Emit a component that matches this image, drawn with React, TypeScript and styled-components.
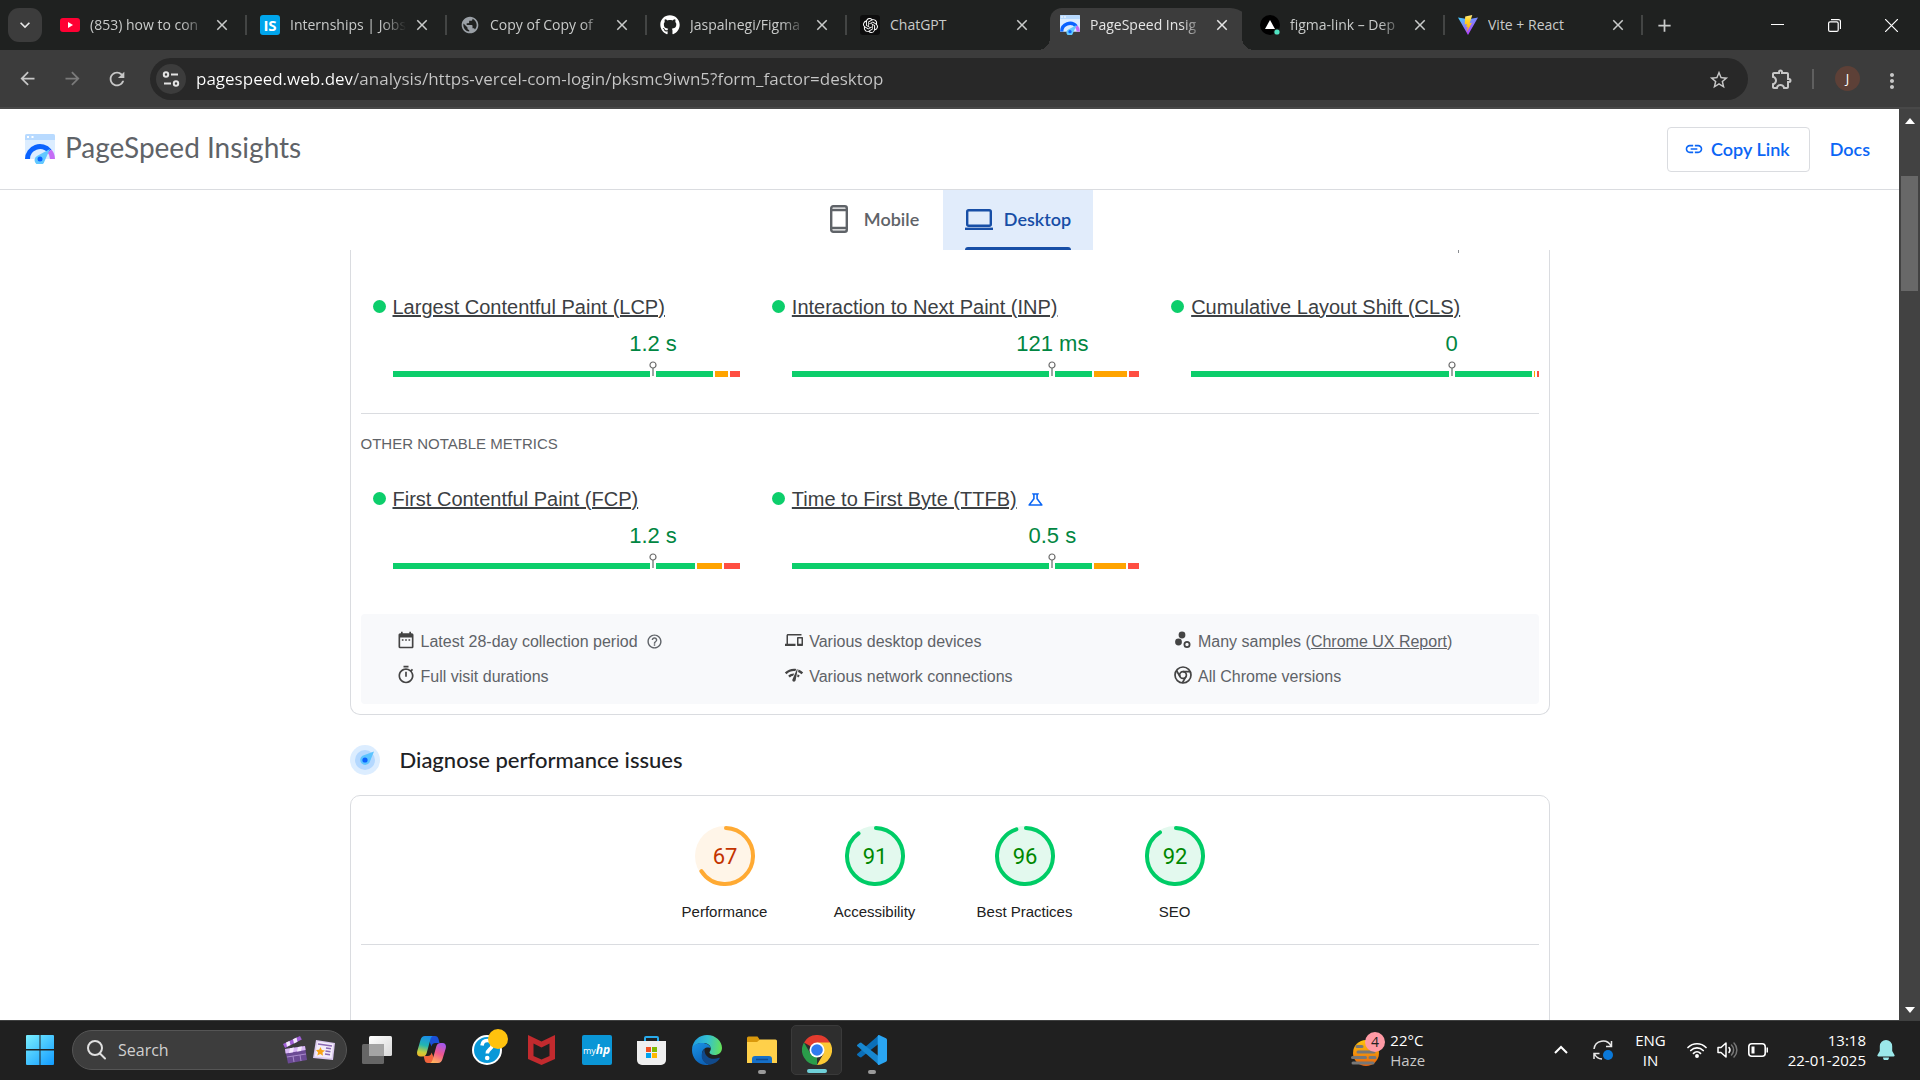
import React from "react";
import styled, { createGlobalStyle, css } from "styled-components";
import {
  MdArrowBack,
  MdArrowForward,
  MdClose,
  MdDateRange,
  MdDevices,
  MdHelpOutline,
  MdKeyboardArrowDown,
  MdLink,
  MdMoreVert,
  MdNetworkCheck,
  MdOutlineExtension,
  MdOutlineScience,
  MdOutlineTimer,
  MdPublic,
  MdRefresh,
  MdStarBorder,
  MdAdd,
} from "react-icons/md";
import { FaGithub } from "react-icons/fa";
import { SiOpenai } from "react-icons/si";

const ui = `"Open Sans", "Noto Sans", sans-serif`;
const brand = `Lato, "Open Sans", sans-serif`;
const body = `"Liberation Sans", Arial, sans-serif`;

const GlobalStyle = createGlobalStyle`
  * { box-sizing: border-box; }
  body { margin: 0; font-family: ${body}; background: #fff; }
  button { font: inherit; color: inherit; background: none; border: 0; padding: 0; margin: 0; cursor: pointer; }
  a { color: inherit; }
  h1, h2, h3, p { margin: 0; font-weight: 400; }
  svg { display: block; flex: none; }
`;

const Shell = styled.div`
  height: 100vh;
  display: flex;
  flex-direction: column;
  overflow: hidden;
`;

/* ---------- browser chrome ---------- */

const TabStrip = styled.div`
  height: 50px;
  flex: none;
  display: flex;
  align-items: center;
  background: #1f2120;
  color: #c9cbca;
  font: 14px/20px ${ui};
  padding-left: 8px;
`;

const TabSearch = styled.button`
  width: 34px;
  height: 34px;
  margin-right: 8px;
  display: grid;
  place-items: center;
  border-radius: 11px;
  background: #3c3c3c;
  color: #e8e8e8;
`;

const TabItem = styled.div<{ $active?: boolean; $compact?: boolean; $divider?: boolean }>`
  position: relative;
  width: ${(p) => (p.$compact ? 198 : 200)}px;
  height: ${(p) => (p.$active ? 42 : 20)}px;
  align-self: ${(p) => (p.$active ? "flex-end" : "center")};
  padding: 0 18px 0 10px;
  display: flex;
  align-items: center;
  gap: 10px;
  ${(p) =>
    p.$divider &&
    css`
      &::after {
        content: "";
        position: absolute;
        right: 3px;
        top: 0;
        width: 2px;
        height: 20px;
        background: #434544;
      }
    `}
  ${(p) =>
    p.$active &&
    css`
      color: #e6e6e6;
      background: linear-gradient(#3c3c3c, #3c3c3c) left / calc(100% - 8px) 100% no-repeat;
      border-radius: 12px 20px 0 0;
      padding-bottom: 8px;
      &::before,
      &::after {
        content: "";
        position: absolute;
        bottom: 0;
        width: 12px;
        height: 12px;
      }
      &::before {
        left: -12px;
        background: radial-gradient(circle at 0 0, transparent 12px, #3c3c3c 12px);
      }
      &::after {
        right: -4px;
        background: radial-gradient(circle at 100% 0, transparent 12px, #3c3c3c 12px);
      }
    `}
`;

const TabTitle = styled.span<{ $fade?: boolean }>`
  flex: 1;
  min-width: 0;
  margin-right: -8px;
  overflow: hidden;
  white-space: nowrap;
  ${(p) => p.$fade && "mask-image: linear-gradient(90deg, #000 76%, transparent 97%);"}
`;

const IconButton = styled.button<{ $size?: number; $muted?: boolean }>`
  width: ${(p) => p.$size ?? 20}px;
  height: ${(p) => p.$size ?? 20}px;
  flex: none;
  display: grid;
  place-items: center;
  opacity: ${(p) => (p.$muted ? 0.45 : 1)};
`;

const WindowControls = styled.div`
  margin-left: auto;
  display: flex;
  color: #fff;
  button {
    width: 57px;
    height: 50px;
  }
`;

const Toolbar = styled.div`
  height: 59px;
  flex: none;
  display: flex;
  align-items: center;
  background: #3c3c3c;
  border-bottom: 2px solid #484848;
  color: #c7c7c7;
  padding: 0 20px 0 12px;
`;

const NavButtons = styled.div`
  display: flex;
  gap: 15px;
  margin-right: 18px;
`;

const Omnibox = styled.label`
  flex: 1;
  height: 42px;
  display: flex;
  align-items: center;
  gap: 10px;
  padding: 0 20px 0 6px;
  border-radius: 21px;
  background: #282828;
`;

const SiteInfo = styled.span`
  width: 30px;
  height: 30px;
  display: grid;
  place-items: center;
  border-radius: 50%;
  background: #3c3c3c;
  color: #e3e3e3;
`;

const UrlInput = styled.input`
  flex: 1;
  min-width: 0;
  height: 28px;
  padding: 0;
  border: 0;
  outline: 0;
  font: 17px/28px ${ui};
  color: #c7c7c7;
  background: linear-gradient(90deg, #fff 156px, #c7c7c7 156px);
  background-clip: text;
  -webkit-text-fill-color: transparent;
`;

const ToolbarEnd = styled.div`
  display: flex;
  align-items: center;
  margin-left: 22px;
`;

const Separator = styled.span`
  width: 2px;
  height: 20px;
  margin: 0 21px 0 18px;
  background: #5f5f5f;
`;

const Avatar = styled.button`
  width: 25px;
  height: 25px;
  margin-right: 20px;
  border-radius: 50%;
  background: #5d4037;
  color: #fff;
  font: 13px/25px ${ui};
`;

/* ---------- page ---------- */

const Viewport = styled.div`
  flex: 1;
  min-height: 0;
  display: flex;
`;

const Page = styled.div`
  flex: 1;
  min-width: 0;
  display: flex;
  flex-direction: column;
  background: #fff;
`;

const Scrollbar = styled.div`
  width: 21px;
  display: flex;
  flex-direction: column;
  align-items: center;
  justify-content: space-between;
  padding: 9px 0 7px;
  background: #424242;
  color: #fff;
`;

const Track = styled.div`
  flex: 1;
  padding-top: 52px;
`;

const Thumb = styled.div`
  width: 17px;
  height: 115px;
  background: #686868;
`;

const Header = styled.header`
  height: 81px;
  flex: none;
  display: flex;
  align-items: center;
  padding: 0 29px 0 25px;
  border-bottom: 1px solid #dadce0;
`;

const Brand = styled.h1`
  display: flex;
  align-items: center;
  gap: 10px;
  margin-right: auto;
  font: 28px/32px ${brand};
  color: #5f6368;
`;

const BrandName = styled.span`
  padding-bottom: 4px;
`;

const CopyButton = styled.button`
  height: 45px;
  display: flex;
  align-items: center;
  gap: 7px;
  padding: 0 19px 0 16px;
  margin-right: 20px;
  border: 1px solid #dadce0;
  border-radius: 4px;
  font: 600 18px/24px ${brand};
  color: #0b66f5;
`;

const DocsLink = styled.a`
  font: 600 18px/24px ${brand};
  color: #0b66f5;
  text-decoration: none;
`;

const DeviceTabs = styled.div`
  height: 60px;
  flex: none;
  display: flex;
  justify-content: center;
`;

const DeviceTab = styled.button<{ $active?: boolean }>`
  display: flex;
  align-items: center;
  gap: ${(p) => (p.$active ? 11 : 16)}px;
  width: ${(p) => (p.$active ? 150 : 137)}px;
  padding-bottom: 2px;
  justify-content: center;
  position: relative;
  font: 600 18px/24px ${brand};
  color: ${(p) => (p.$active ? "#174ea6" : "#5f6368")};
  background: ${(p) => (p.$active ? "#e1ecfb" : "transparent")};
  ${(p) =>
    p.$active &&
    css`
      &::after {
        content: "";
        position: absolute;
        left: 22px;
        right: 22px;
        bottom: 0;
        height: 3px;
        border-radius: 3px 3px 0 0;
        background: #174ea6;
      }
    `}
`;

const Scroller = styled.main`
  flex: 1;
  min-height: 0;
  overflow: hidden;
`;

const Column = styled.div`
  width: 100%;
  max-width: 1200px;
  margin: 0 auto;
`;

const Card = styled.section<{ $cut?: boolean }>`
  border: 1px solid #dadce0;
  border-radius: ${(p) => (p.$cut ? "0 0 10px 10px" : "10px")};
  border-top-width: ${(p) => (p.$cut ? 0 : 1)}px;
  padding: ${(p) => (p.$cut ? "0 10px 10px" : "0 10px 120px")};
`;

const CutStem = styled.div`
  width: 1px;
  height: 3px;
  margin-left: auto;
  margin-right: 80px;
  background: #8a8d91;
`;

const MetricGrid = styled.div`
  display: grid;
  grid-template-columns: repeat(3, 1fr);
  column-gap: 32px;
  padding-left: 12px;
`;

const Metric = styled.article`
  display: grid;
  grid-template-columns: 13px 1fr;
  column-gap: 7px;
  align-items: center;
`;

const Dot = styled.span`
  width: 13px;
  height: 13px;
  margin-bottom: 2px;
  border-radius: 50%;
  background: #0cce6b;
`;

const MetricTitle = styled.h3`
  display: flex;
  align-items: center;
  gap: 9px;
  font: 20px/26px ${body};
  color: #3c4043;
  white-space: nowrap;
  svg {
    color: #0b66f5;
  }
`;

const MetricValue = styled.p`
  grid-column: 2;
  width: 50%;
  margin: 12px 0 15px auto;
  text-align: center;
  font: 22px/24px ${body};
  color: #018642;
`;

const Bar = styled.div`
  grid-column: 2;
  position: relative;
  display: flex;
  gap: 2px;
  height: 6px;
`;

const Segment = styled.span<{ $share: number; $tone: string }>`
  flex: ${(p) => p.$share} 1 0;
  background: ${(p) => p.$tone};
`;

const Marker = styled.svg`
  position: absolute;
  left: 75%;
  bottom: 0;
  margin-left: -4px;
`;

const Divider = styled.hr`
  border: 0;
  border-top: 1px solid #dadce0;
  margin: 0;
`;

const SectionLabel = styled.h2`
  font: 15px/20px ${body};
  color: #5f6368;
`;

const Block = styled.div<{ $top: number; $bottom: number }>`
  padding: ${(p) => p.$top}px 0 ${(p) => p.$bottom}px;
`;

const MetaGrid = styled.ul`
  list-style: none;
  margin: 0;
  padding: 10px 0;
  display: grid;
  grid-template-columns: repeat(3, 33%);
  grid-auto-rows: 35px;
  border-radius: 4px;
  background: #f8f9fb;
`;

const MetaItem = styled.li`
  display: flex;
  align-items: center;
  gap: 6px;
  padding-left: 36px;
  font: 16px/20px ${body};
  color: #5f6368;
  white-space: nowrap;
`;

const MetaIcon = styled.span`
  width: 18px;
  display: flex;
  justify-content: center;
  padding-bottom: 4px;
  color: #444;
`;

const MetaText = styled.span`
  margin-right: 2px;
`;

const SectionTitle = styled.h2`
  display: flex;
  align-items: center;
  gap: 20px;
  padding: 30px 0 20px;
  font: 500 22px/30px ${brand};
  color: #202124;
`;

const Gauges = styled.div`
  display: flex;
  justify-content: center;
  padding: 30px 0 22px;
`;

const GaugeLink = styled.a`
  width: 150px;
  display: flex;
  flex-direction: column;
  align-items: center;
  gap: 16px;
  font: 15px/20px ${body};
  color: #212121;
  text-decoration: none;
`;

/* ---------- taskbar ---------- */

const Taskbar = styled.footer`
  height: 60px;
  flex: none;
  display: flex;
  align-items: center;
  border-top: 1px solid #3f4040;
  background: #202020;
  color: #fff;
  font: 15px/20px ${ui};
  padding: 0 25px 2px 12px;
`;

const TaskSlot = styled.button<{ $open?: "idle" | "focus" }>`
  position: relative;
  width: 55px;
  height: 50px;
  display: grid;
  place-items: center;
  ${(p) =>
    p.$open === "focus" &&
    css`
      width: 51px;
      margin: 0 2px;
      border: 1px solid #3a3a3a;
      border-radius: 5px;
      background: #2e2e2e;
    `}
  ${(p) =>
    p.$open &&
    css`
      &::after {
        content: "";
        position: absolute;
        bottom: 1px;
        left: 50%;
        width: ${p.$open === "focus" ? 20 : 8}px;
        margin-left: ${p.$open === "focus" ? -10 : -4}px;
        height: 4px;
        border-radius: 2px;
        background: ${p.$open === "focus" ? "#6fd0d8" : "#9a9a9a"};
      }
    `}
`;

const SearchBox = styled.label`
  width: 275px;
  height: 40px;
  margin: 0 2px 0 5px;
  padding: 0 10px 0 14px;
  display: flex;
  align-items: center;
  gap: 12px;
  border: 1px solid #555;
  border-radius: 20px;
  background: #3d3d3d;
`;

const SearchInput = styled.input`
  flex: 1;
  min-width: 0;
  border: 0;
  outline: 0;
  padding: 0;
  background: none;
  font: 16px/24px ${ui};
  color: #d0d0d0;
  &::placeholder {
    color: #d0d0d0;
    opacity: 1;
  }
`;

const SearchArt = styled.span`
  display: flex;
  align-items: center;
  gap: 5px;
`;

const Tray = styled.div`
  margin-left: auto;
  display: flex;
  align-items: center;
`;

const Weather = styled.button`
  display: flex;
  align-items: center;
  gap: 5px;
  margin-right: 126px;
  text-align: left;
`;

const Stack = styled.span<{ $align?: string }>`
  display: flex;
  flex-direction: column;
  text-align: ${(p) => p.$align ?? "left"};
  line-height: 20px;
`;

const Dim = styled.span`
  color: #c8c8c8;
`;

const TrayGroup = styled.span<{ $left: number; $gap?: number }>`
  display: flex;
  align-items: center;
  gap: ${(p) => p.$gap ?? 0}px;
  margin-left: ${(p) => p.$left}px;
`;

/* ---------- drawings ---------- */

const PsiLogo = ({ size, id }: { size: number; id: string }) => (
  <svg width={size} height={size} viewBox="0 0 30 30" aria-hidden="true">
    <defs>
      <clipPath id={id}>
        <path d="M0 0h30v25H0z" />
      </clipPath>
    </defs>
    <path d="M2 0h26a2 2 0 0 1 2 2v23H0V2a2 2 0 0 1 2-2z" fill="#dcedff" />
    <path d="M2 0h26a2 2 0 0 1 2 2v4H0V2a2 2 0 0 1 2-2z" fill="#b8daff" />
    <path d="M2 2h2v2H2zM6.500 2h2v2h-2z" fill="#fff" />
    <g clipPath={`url(#${id})`} fill="none" strokeWidth="5">
      <path d="M2.500 25a12.500 12.500 0 0 1 22-8" stroke="#0a63ff" />
      <path d="M24.500 17a12.500 12.500 0 0 1 3 8" stroke="#c56cf5" />
    </g>
    <path d="M25 15 19.400 27.500a5 5 0 1 1-7-5.800z" fill="#62c8ff" />
    <circle cx="15" cy="25" r="2.500" fill="#0a63ff" />
  </svg>
);

const YouTube = () => (
  <svg width="20" height="20" viewBox="0 0 20 20">
    <rect y="3" width="20" height="14" rx="3" fill="#ff0033" />
    <path d="M8 7v6l5-3z" fill="#fff" />
  </svg>
);

const LetterMark = styled.span`
  width: 20px;
  height: 20px;
  flex: none;
  border-radius: 3px;
  background: #00a5ec;
  color: #fff;
  font: 700 15px/20px ${ui};
  text-align: center;
`;

const VercelMark = () => (
  <svg width="20" height="20" viewBox="0 0 20 20">
    <circle cx="10" cy="10" r="10" fill="#000" />
    <path d="M10 5l5 9H5z" fill="#fff" />
    <circle cx="17" cy="17" r="3.500" fill="#1f2120" />
    <circle cx="17" cy="17" r="2.600" fill="#50e3c2" />
  </svg>
);

const ViteMark = () => (
  <svg width="20" height="20" viewBox="0 0 20 20">
    <defs>
      <linearGradient id="viteBody" x1="0" y1="0" x2=".6" y2="1">
        <stop stopColor="#41d1ff" />
        <stop offset="1" stopColor="#bd34fe" />
      </linearGradient>
      <linearGradient id="viteBolt" x1="0" y1="0" x2="0" y2="1">
        <stop stopColor="#ffea83" />
        <stop offset=".3" stopColor="#ffd62b" />
        <stop offset="1" stopColor="#ffa800" />
      </linearGradient>
    </defs>
    <path d="M0 2.500 10 20 20 2.500 10.500 4.200z" fill="url(#viteBody)" />
    <path d="M14.300 0 7.200 1.400 6.700 9.500l2.200-.5-.7 3.200 1.600-.4-1.100 5.200 5.200-9.200-2.300.4z" fill="url(#viteBolt)" />
  </svg>
);

const ChatMark = styled.span`
  width: 20px;
  height: 20px;
  flex: none;
  display: grid;
  place-items: center;
  border-radius: 3px;
  background: #0d0d0d;
  color: #fff;
`;

const TuneIcon = () => (
  <svg width="18" height="18" viewBox="0 0 18 18" fill="none" stroke="currentColor" strokeWidth="2">
    <circle cx="4" cy="4.500" r="2.200" />
    <path d="M9 4.500h7M2 13.500h7" />
    <circle cx="14" cy="13.500" r="2.200" />
  </svg>
);

const PhoneIcon = () => (
  <svg width="18" height="28" viewBox="0 0 18 28">
    <rect x="1.200" y="1.200" width="15.600" height="25.600" rx="2" fill="none" stroke="currentColor" strokeWidth="2.400" />
    <path d="M2 5h14M2 23h14" stroke="currentColor" strokeWidth="2.400" />
  </svg>
);

const LaptopIcon = () => (
  <svg width="28" height="21" viewBox="0 0 28 21" fill="none" stroke="currentColor" strokeWidth="2.400">
    <rect x="2.200" y="1.200" width="23.600" height="15.600" rx="1.500" />
    <path d="M0 19.800h28" />
  </svg>
);

const SamplesIcon = () => (
  <svg width="18" height="18" viewBox="0 0 18 18" fill="currentColor">
    <circle cx="8" cy="4" r="3.400" />
    <circle cx="4.500" cy="11" r="3.400" />
    <circle cx="13" cy="13.500" r="2.600" fill="none" stroke="currentColor" strokeWidth="1.800" />
  </svg>
);

const ChromeLine = () => (
  <svg width="18" height="18" viewBox="0 0 18 18" fill="none" stroke="currentColor" strokeWidth="1.700">
    <circle cx="9" cy="9" r="8" />
    <circle cx="9" cy="9" r="3.400" />
    <path d="M9 5.600h7.200M6.100 10.700 2.500 4.500M11.900 10.700 8.300 17" />
  </svg>
);

const CompassIcon = () => (
  <svg width="30" height="30" viewBox="0 0 30 30">
    <circle cx="15" cy="15" r="15" fill="#dcedff" />
    <circle cx="15" cy="15" r="10" fill="#b4d8ff" />
    <path d="M24 6.500 19.500 17.500A5 5 0 1 1 12.500 10.700z" fill="#5cc4ff" />
    <circle cx="15" cy="15" r="2.600" fill="#0a63ff" />
  </svg>
);

const StartLogo = () => (
  <svg width="28" height="30" viewBox="0 0 28 30">
    <defs>
      <linearGradient id="start" gradientUnits="userSpaceOnUse" x1="0" y1="0" x2="28" y2="30">
        <stop stopColor="#7aefff" />
        <stop offset="1" stopColor="#119bff" />
      </linearGradient>
    </defs>
    <path d="M1 0h12.500v14H0V1a1 1 0 0 1 1-1zM14.500 0H27a1 1 0 0 1 1 1v13H14.500zM0 15.500h13.500V30H1a1 1 0 0 1-1-1zM14.500 15.500H28V29a1 1 0 0 1-1 1H14.500z" fill="url(#start)" />
  </svg>
);

const Lens = () => (
  <svg width="19" height="20" viewBox="0 0 19 20" fill="none" stroke="#e0e0e0" strokeWidth="2">
    <circle cx="8" cy="8" r="7" />
    <path d="m13 13.500 5 5" strokeLinecap="round" />
  </svg>
);

const Clapper = () => (
  <svg width="26" height="28" viewBox="0 0 26 28">
    <path d="m3 13 20-3 2 14-19 3.500z" fill="#6b4a94" />
    <path d="m3 13 20-3 .6 4-20 3.400z" fill="#d9b8f5" />
    <path d="M1 8 18 0l1.800 3.600L3 12z" fill="#a05fd6" />
    <path d="m4 6.600 3.500-1.700 1 4.200L5 10.800zM11 3.300l3.500-1.700 1 4.100-3.500 1.700zM8 12.200l4-.6-1 4.600-4 .7zM16 11l4-.6-1 4.500-4 .6z" fill="#f4e8fd" />
    <path d="m5 21 19-3M11 20l1 6M18 19l1 6" stroke="#a98acb" strokeWidth="1" />
  </svg>
);

const NewsArt = () => (
  <svg width="23" height="22" viewBox="0 0 23 22">
    <path d="m3 1 19 3-2 17L0 19z" fill="#dccbf0" />
    <path d="m4.500 2.500 15.800 2.500-1.700 14L1.800 17.500z" fill="#f3ecfa" />
    <path d="m5 5 14 2M13 9l5 .7M12.500 12l5 .7M12 15l5 .7" stroke="#8a68b3" strokeWidth="1.500" />
    <path d="m7.500 8 1.300 2.900 3.200.5-2.500 2.100.5 3.300-2.800-1.700-2.900 1.400.8-3.100L3 11l3.200-.2z" fill="#f7a418" />
  </svg>
);

const TaskView = () => (
  <svg width="30" height="30" viewBox="0 0 30 30">
    <defs>
      <linearGradient id="viewFront" x1="0" y1="0" x2="1" y2="1">
        <stop stopColor="#fff" />
        <stop offset="1" stopColor="#d8d8d8" />
      </linearGradient>
    </defs>
    <rect y="9" width="22" height="20" rx="1.500" fill="#666" />
    <rect x="7" y="1" width="23" height="20" rx="1.500" fill="url(#viewFront)" />
    <path d="M7 9h15v12H7z" fill="#a4a4a4" />
  </svg>
);

const Copilot = () => (
  <svg width="29" height="27" viewBox="0 0 29 27">
    <defs>
      <linearGradient id="copLeft" x1=".5" y1="0" x2=".3" y2="1">
        <stop stopColor="#1a8ee8" />
        <stop offset=".45" stopColor="#23b6b0" />
        <stop offset=".8" stopColor="#c9cf3a" />
        <stop offset="1" stopColor="#f0b52b" />
      </linearGradient>
      <linearGradient id="copRight" x1=".7" y1="0" x2=".3" y2="1">
        <stop stopColor="#a457ee" />
        <stop offset=".5" stopColor="#f0588c" />
        <stop offset="1" stopColor="#ffb45c" />
      </linearGradient>
    </defs>
    <path d="M10 0h8c2 0 3 1 3.500 3l1 4h-4c-2.500 0-3.500 1.500-4 3.500z" fill="#1a50d8" />
    <path d="M19 27h-8c-2 0-3-1-3.400-3l-1-4h4c2.500 0 3.500-1.500 4-3.500z" fill="#f0643c" />
    <path d="M8 0h8.500c-2 0-2.700 2-3.300 4l-3.500 13c-.7 2.400-2 3.500-4.500 3.500H3.500C.5 20.500-.5 18 .3 15L3.500 4C4.300 1.500 5.600 0 8 0z" fill="url(#copLeft)" />
    <path d="M21 27h-8.500c2 0 2.700-2 3.300-4l3.500-12.500c.7-2.400 2-3.500 4.500-3.500h1.700c3 0 4 2.500 3.200 5.500L25.500 23c-.8 2.500-2.100 4-4.500 4z" fill="url(#copRight)" />
  </svg>
);

const HelpBadge = () => (
  <svg width="32" height="32" viewBox="0 6 32 32" overflow="visible">
    <circle cx="16" cy="22" r="14" fill="#0898d8" stroke="#fff" strokeWidth="2" />
    <path d="M11 17.500c.3-3.400 2.600-5 5.300-5 3 0 5 1.800 5 4.400 0 4.300-5 4.300-5 8.600" fill="none" stroke="#fff" strokeWidth="3.600" />
    <circle cx="16.200" cy="30" r="2.300" fill="#fff" />
    <circle cx="27" cy="11" r="10" fill="#ffc20e" />
  </svg>
);

const Shield = () => (
  <svg width="27" height="30" viewBox="0 0 27 30">
    <path d="m0 0 13.500 6.500L27 0v24l-13.500 6L0 24z" fill="#c22a2e" />
    <path d="m5.500 8.500 8 4 8-4V21l-8 3.600-8-3.600z" fill="#202020" />
  </svg>
);

const HpTile = styled.span`
  width: 30px;
  height: 30px;
  border-radius: 2px;
  background: #0a96d6;
  color: #fff;
  font: 9px/30px ${ui};
  text-align: center;
  white-space: nowrap;
  i {
    font-size: 12px;
    font-weight: 700;
  }
`;

const StoreBag = () => (
  <svg width="29" height="30" viewBox="0 0 29 30">
    <path d="M8 7V3a1 1 0 0 1 1-1h11a1 1 0 0 1 1 1v4" fill="none" stroke="#28aaeb" strokeWidth="2" />
    <path d="M0 6h29v19a5 5 0 0 1-5 5H5a5 5 0 0 1-5-5z" fill="#efefef" />
    <path d="M9 12h5v5H9z" fill="#f25022" />
    <path d="M15 12h5v5h-5z" fill="#7fba00" />
    <path d="M9 18h5v5H9z" fill="#00a4ef" />
    <path d="M15 18h5v5h-5z" fill="#ffb900" />
  </svg>
);

const Edge = () => (
  <svg width="30" height="30" viewBox="0 0 30 30">
    <defs>
      <linearGradient id="edgeTop" x1="0" y1=".5" x2="1" y2=".6">
        <stop stopColor="#1f9de0" />
        <stop offset=".5" stopColor="#35c1d0" />
        <stop offset="1" stopColor="#66e356" />
      </linearGradient>
      <linearGradient id="edgeLow" x1="0" y1="0" x2=".5" y2="1">
        <stop stopColor="#1a94e6" />
        <stop offset="1" stopColor="#0c62b8" />
      </linearGradient>
    </defs>
    <path d="M0 14C1 5 7.500 0 15 0c9 0 15 6.500 15 13 0 4.500-3.500 7-7.500 7-3.500 0-5-1.400-5-2.400 0-1.200 1.300-1.600 1.300-4.100C18.800 10 15 8 11 8 6 8 2 10 0 14z" fill="url(#edgeTop)" />
    <path d="M0 15C0 10 5 8 10 8c5 0 8.500 2.500 8.800 5.500C17 11.500 10.500 12 10 18.500 9.500 25 14 29 18 29.600 8 32 0 24.500 0 15z" fill="url(#edgeLow)" />
    <path d="M12.500 14C8 18 8.500 28 18 29.700c4.500-.7 7.700-3.200 9.700-6.200.4-.7-.2-1-.8-.7-6.900 3-14.900-.4-14.400-8.800z" fill="#114a8b" />
  </svg>
);

const Folder = () => (
  <svg width="30" height="28" viewBox="0 0 30 28">
    <path d="M0 2a1.500 1.500 0 0 1 1.500-1.500h9L13 4v6H0z" fill="#d9980c" />
    <path d="M0 6h10l3-2.500h15.500A1.500 1.500 0 0 1 30 5v22H0z" fill="#ffd04a" />
    <path d="M5 27v-4a3 3 0 0 1 3-3h14a3 3 0 0 1 3 3v4z" fill="#1670c8" />
    <path d="M9 23.500h12" stroke="#0c4a92" strokeWidth="1.500" />
  </svg>
);

const Chrome = () => (
  <svg width="30" height="30" viewBox="0 0 30 30">
    <path d="M15 15 2 7.500a15 15 0 0 1 26 0z" fill="#e33b2e" />
    <path d="M2 7.500 8.500 18.700 15 22.500V30A15 15 0 0 1 2 7.500z" fill="#2a9d4a" />
    <path d="M15 7.500h13A15 15 0 0 1 15 30l6.500-11.300z" fill="#fcc934" />
    <circle cx="15" cy="15" r="7.500" fill="#fff" />
    <circle cx="15" cy="15" r="5.800" fill="#2f7bf0" />
  </svg>
);

const Code = () => (
  <svg width="30" height="30" viewBox="0 0 30 30">
    <path d="M22 0v8.500L4 22.500 2.500 22 .4 20.200a1 1 0 0 1 0-1.500z" fill="#0b6fb8" />
    <path d="M22 30v-8.500L4 7.500 2.500 8 .4 9.800a1 1 0 0 0 0 1.500z" fill="#1787d0" />
    <path d="M22 0l7 3.200a2 2 0 0 1 1 1.700v20.200a2 2 0 0 1-1 1.700L22 30c-.7 0-1.300-.6-1.300-1.300V1.300C20.700.6 21.300 0 22 0z" fill="#2aa5f2" />
  </svg>
);

const Haze = () => (
  <svg width="34" height="36" viewBox="0 0 34 36">
    <defs>
      <linearGradient id="sun" x1="0" y1="0" x2="0" y2="1">
        <stop stopColor="#ffc40c" />
        <stop offset="1" stopColor="#e8600c" />
      </linearGradient>
    </defs>
    <circle cx="15" cy="21" r="13" fill="url(#sun)" />
    <path d="M6 14.500h5M7 20h16M1.500 25.500h13M19 25.500h5M2 31h20" stroke="#777" strokeWidth="3" strokeLinecap="round" />
    <circle cx="24" cy="10" r="10" fill="#ff9aa5" />
    <text x="24" y="15" textAnchor="middle" fontSize="14" fill="#222" fontFamily="Open Sans, sans-serif">4</text>
  </svg>
);

const Sync = () => (
  <svg width="22" height="22" viewBox="0 0 22 22" fill="none" stroke="#e8e8e8" strokeWidth="1.500">
    <path d="M2 10a9 9 0 0 1 17-3M19.500 2v5.500H14M10 20a9 9 0 0 1-7.500-5M2 20v-5.500h5.500" />
    <circle cx="16" cy="16" r="5" fill="#0a78d8" stroke="none" />
  </svg>
);

const Wifi = () => (
  <svg width="20" height="16" viewBox="0 0 20 16" fill="none" stroke="#fff" strokeWidth="1.700" strokeLinecap="round">
    <path d="M1 5.500a12.700 12.700 0 0 1 18 0M3.800 8.500a8.800 8.800 0 0 1 12.400 0M6.500 11.300a5 5 0 0 1 7 0" />
    <circle cx="10" cy="14" r="1.100" fill="#fff" />
  </svg>
);

const Volume = () => (
  <svg width="21" height="18" viewBox="0 0 21 18" fill="none" stroke="#fff" strokeWidth="1.500" strokeLinecap="round" strokeLinejoin="round">
    <path d="M1 6.500v5h3l5 4.500V2L4 6.500zM12 6.500a4 4 0 0 1 0 5" />
    <path d="M14.500 4a7 7 0 0 1 0 10M17 2a10 10 0 0 1 0 14" stroke="#777" />
  </svg>
);

const Battery = () => (
  <svg width="21" height="14" viewBox="0 0 21 14">
    <rect x=".8" y=".8" width="16.400" height="12.400" rx="3" fill="none" stroke="#fff" strokeWidth="1.600" />
    <path d="M3.500 3.500h3v7h-3zM18.500 4.500h1.500v5h-1.500z" fill="#fff" />
  </svg>
);

const Bell = () => (
  <svg width="18" height="20" viewBox="0 0 18 20" fill="#9be8ea">
    <path d="M9 0a6.200 6.200 0 0 1 6.200 6.200V11l2.300 4a1 1 0 0 1-.9 1.500H1.400A1 1 0 0 1 .5 15l2.300-4V6.200A6.200 6.200 0 0 1 9 0zM6 17.500h6a3 3 0 0 1-6 0z" />
  </svg>
);

/* ---------- composed parts ---------- */

type TabData = { icon: React.ReactNode; title: string; fade?: boolean; active?: boolean; compact?: boolean; divider?: boolean };

const tabs: TabData[] = [
  { icon: <YouTube />, title: "(853) how to con", fade: true, divider: true },
  { icon: <LetterMark>IS</LetterMark>, title: "Internships | Jobs", fade: true, divider: true },
  { icon: <MdPublic size={20} color="#9aa0a6" />, title: "Copy of Copy of", fade: true, divider: true },
  { icon: <FaGithub size={20} color="#fff" />, title: "Jaspalnegi/Figma", fade: true, divider: true },
  { icon: <ChatMark><SiOpenai size={15} /></ChatMark>, title: "ChatGPT" },
  { icon: <PsiLogo size={20} id="tabArc" />, title: "PageSpeed Insig", fade: true, active: true },
  { icon: <VercelMark />, title: "figma-link – Dep", fade: true, compact: true, divider: true },
  { icon: <ViteMark />, title: "Vite + React", compact: true, divider: true },
];

const GREEN = "#0cce6b";
const ORANGE = "#ffa400";
const RED = "#ff4e42";

type MetricData = { name: string; value: string; shares: [number, number, number]; experimental?: boolean };

const coreMetrics: MetricData[] = [
  { name: "Largest Contentful Paint (LCP)", value: "1.2 s", shares: [320, 13, 10] },
  { name: "Interaction to Next Paint (INP)", value: "121 ms", shares: [300, 33, 10] },
  { name: "Cumulative Layout Shift (CLS)", value: "0", shares: [340, 1, 2] },
];

const otherMetrics: MetricData[] = [
  { name: "First Contentful Paint (FCP)", value: "1.2 s", shares: [302, 25, 16] },
  { name: "Time to First Byte (TTFB)", value: "0.5 s", shares: [300, 32, 11], experimental: true },
];

const MetricView = ({ m }: { m: MetricData }) => (
  <Metric>
    <Dot />
    <MetricTitle>
      <a href="#metric">{m.name}</a>
      {m.experimental && <MdOutlineScience size={19} />}
    </MetricTitle>
    <MetricValue>{m.value}</MetricValue>
    <Bar>
      <Segment $share={m.shares[0]} $tone={GREEN} />
      <Segment $share={m.shares[1]} $tone={ORANGE} />
      <Segment $share={m.shares[2]} $tone={RED} />
      <Marker width="8" height="16" viewBox="0 0 8 16">
        <path d="M1 10h6v6H1z" fill="#fff" />
        <path d="M4 7v8" stroke="#7d8a84" strokeWidth="1.500" />
        <circle cx="4" cy="4" r="3" fill="#fff" stroke="#6b6b6b" strokeWidth="1.200" />
      </Marker>
    </Bar>
  </Metric>
);

const gauges = [
  { label: "Performance", score: 67, ring: "#fa3", text: "#c33300", fill: "#fff5e8" },
  { label: "Accessibility", score: 91, ring: "#0c6", text: "#080", fill: "#e3f9ee" },
  { label: "Best Practices", score: 96, ring: "#0c6", text: "#080", fill: "#e3f9ee" },
  { label: "SEO", score: 92, ring: "#0c6", text: "#080", fill: "#e3f9ee" },
];

const Gauge = ({ g }: { g: (typeof gauges)[number] }) => {
  const length = 2 * Math.PI * 28;
  return (
    <GaugeLink href={`#${g.label}`}>
      <svg width="60" height="60" viewBox="0 0 60 60">
        <circle cx="30" cy="30" r="30" fill={g.fill} />
        <circle
          cx="30"
          cy="30"
          r="28"
          fill="none"
          stroke={g.ring}
          strokeWidth="4"
          strokeLinecap="round"
          strokeDasharray={`${(g.score / 100) * length - 3} ${length}`}
          transform="rotate(-88 30 30)"
        />
        <text x="30" y="38" textAnchor="middle" fontSize="22" fontFamily="Roboto, sans-serif" fill={g.text}>
          {g.score}
        </text>
      </svg>
      {g.label}
    </GaugeLink>
  );
};

export default function App() {
  return (
    <Shell>
      <GlobalStyle />
      <TabStrip>
        <TabSearch aria-label="Search tabs"><MdKeyboardArrowDown size={20} /></TabSearch>
        {tabs.map((t) => (
          <TabItem key={t.title} $active={t.active} $compact={t.compact} $divider={t.divider}>
            {t.icon}
            <TabTitle $fade={t.fade}>{t.title}</TabTitle>
            <IconButton aria-label={`Close ${t.title}`}><MdClose size={18} /></IconButton>
          </TabItem>
        ))}
        <IconButton aria-label="New tab" $size={36}><MdAdd size={21} /></IconButton>
        <WindowControls>
          <IconButton aria-label="Minimize">
            <svg width="13" height="13" viewBox="0 0 13 13"><path d="M0 5.500h13" stroke="#fff" /></svg>
          </IconButton>
          <IconButton aria-label="Restore">
            <svg width="13" height="13" viewBox="0 0 13 13" fill="none" stroke="#fff" strokeWidth="1.200">
              <rect x=".6" y="2.800" width="9.600" height="9.600" rx="1.500" />
              <path d="M3 .7h7.500a2 2 0 0 1 2 2V10" />
            </svg>
          </IconButton>
          <IconButton aria-label="Close window">
            <svg width="13" height="13" viewBox="0 0 13 13"><path d="m0 0 13 13M13 0 0 13" stroke="#fff" strokeWidth="1.200" /></svg>
          </IconButton>
        </WindowControls>
      </TabStrip>

      <Toolbar>
        <NavButtons>
          <IconButton aria-label="Back" $size={30}><MdArrowBack size={21} /></IconButton>
          <IconButton aria-label="Forward" $size={30} $muted><MdArrowForward size={21} /></IconButton>
          <IconButton aria-label="Reload" $size={30}><MdRefresh size={22} /></IconButton>
        </NavButtons>
        <Omnibox>
          <SiteInfo><TuneIcon /></SiteInfo>
          <UrlInput
            aria-label="Address"
            defaultValue="pagespeed.web.dev/analysis/https-vercel-com-login/pksmc9iwn5?form_factor=desktop"
          />
          <IconButton aria-label="Bookmark"><MdStarBorder size={22} /></IconButton>
        </Omnibox>
        <ToolbarEnd>
          <IconButton aria-label="Extensions" $size={24}><MdOutlineExtension size={24} /></IconButton>
          <Separator />
          <Avatar>J</Avatar>
          <IconButton aria-label="Menu"><MdMoreVert size={24} /></IconButton>
        </ToolbarEnd>
      </Toolbar>

      <Viewport>
        <Page>
          <Header>
            <Brand><PsiLogo size={30} id="brandArc" /><BrandName>PageSpeed Insights</BrandName></Brand>
            <CopyButton><MdLink size={20} />Copy Link</CopyButton>
            <DocsLink href="#docs">Docs</DocsLink>
          </Header>
          <DeviceTabs role="tablist">
            <DeviceTab role="tab"><PhoneIcon />Mobile</DeviceTab>
            <DeviceTab role="tab" aria-selected="true" $active><LaptopIcon />Desktop</DeviceTab>
          </DeviceTabs>
          <Scroller>
            <Column>
              <Card $cut>
                <CutStem />
                <Block $top={41} $bottom={36}>
                  <MetricGrid>{coreMetrics.map((m) => <MetricView key={m.name} m={m} />)}</MetricGrid>
                </Block>
                <Divider />
                <Block $top={20} $bottom={0}><SectionLabel>OTHER NOTABLE METRICS</SectionLabel></Block>
                <Block $top={32} $bottom={45}>
                  <MetricGrid>{otherMetrics.map((m) => <MetricView key={m.name} m={m} />)}</MetricGrid>
                </Block>
                <MetaGrid>
                  <MetaItem><MetaIcon><MdDateRange size={20} /></MetaIcon><MetaText>Latest 28-day collection period</MetaText><MdHelpOutline size={17} /></MetaItem>
                  <MetaItem><MetaIcon><MdDevices size={18} /></MetaIcon>Various desktop devices</MetaItem>
                  <MetaItem><MetaIcon><SamplesIcon /></MetaIcon><span>Many samples (<a href="#crux">Chrome UX Report</a>)</span></MetaItem>
                  <MetaItem><MetaIcon><MdOutlineTimer size={20} /></MetaIcon>Full visit durations</MetaItem>
                  <MetaItem><MetaIcon><MdNetworkCheck size={20} /></MetaIcon>Various network connections</MetaItem>
                  <MetaItem><MetaIcon><ChromeLine /></MetaIcon>All Chrome versions</MetaItem>
                </MetaGrid>
              </Card>
              <SectionTitle><CompassIcon />Diagnose performance issues</SectionTitle>
              <Card>
                <Gauges>{gauges.map((g) => <Gauge key={g.label} g={g} />)}</Gauges>
                <Divider />
              </Card>
            </Column>
          </Scroller>
        </Page>
        <Scrollbar aria-hidden="true">
          <svg width="10" height="6" viewBox="0 0 10 6"><path d="M5 0l5 6H0z" fill="#fff" /></svg>
          <Track><Thumb /></Track>
          <svg width="10" height="6" viewBox="0 0 10 6"><path d="M5 6l5-6H0z" fill="#fff" /></svg>
        </Scrollbar>
      </Viewport>

      <Taskbar>
        <TaskSlot aria-label="Start"><StartLogo /></TaskSlot>
        <SearchBox>
          <Lens />
          <SearchInput aria-label="Search" placeholder="Search" />
          <SearchArt><Clapper /><NewsArt /></SearchArt>
        </SearchBox>
        <TaskSlot aria-label="Task view"><TaskView /></TaskSlot>
        <TaskSlot aria-label="Copilot"><Copilot /></TaskSlot>
        <TaskSlot aria-label="Help"><HelpBadge /></TaskSlot>
        <TaskSlot aria-label="McAfee"><Shield /></TaskSlot>
        <TaskSlot aria-label="myHP"><HpTile>my<i>hp</i></HpTile></TaskSlot>
        <TaskSlot aria-label="Store"><StoreBag /></TaskSlot>
        <TaskSlot aria-label="Edge"><Edge /></TaskSlot>
        <TaskSlot aria-label="Files" $open="idle"><Folder /></TaskSlot>
        <TaskSlot aria-label="Chrome" $open="focus"><Chrome /></TaskSlot>
        <TaskSlot aria-label="Code" $open="idle"><Code /></TaskSlot>
        <Tray>
          <Weather>
            <Haze />
            <Stack>22°C<Dim>Haze</Dim></Stack>
          </Weather>
          <IconButton aria-label="Hidden icons">
            <svg width="14" height="9" viewBox="0 0 14 9"><path d="m1 8 6-6 6 6" fill="none" stroke="#fff" strokeWidth="2" /></svg>
          </IconButton>
          <TrayGroup $left={21}><Sync /></TrayGroup>
          <TrayGroup $left={21}><Stack $align="center"><span>ENG</span><span>IN</span></Stack></TrayGroup>
          <TrayGroup $left={21} $gap={10}><Wifi /><Volume /><Battery /></TrayGroup>
          <TrayGroup $left={19}><Stack $align="right"><span>13:18</span><span>22-01-2025</span></Stack></TrayGroup>
          <TrayGroup $left={11}><Bell /></TrayGroup>
        </Tray>
      </Taskbar>
    </Shell>
  );
}
